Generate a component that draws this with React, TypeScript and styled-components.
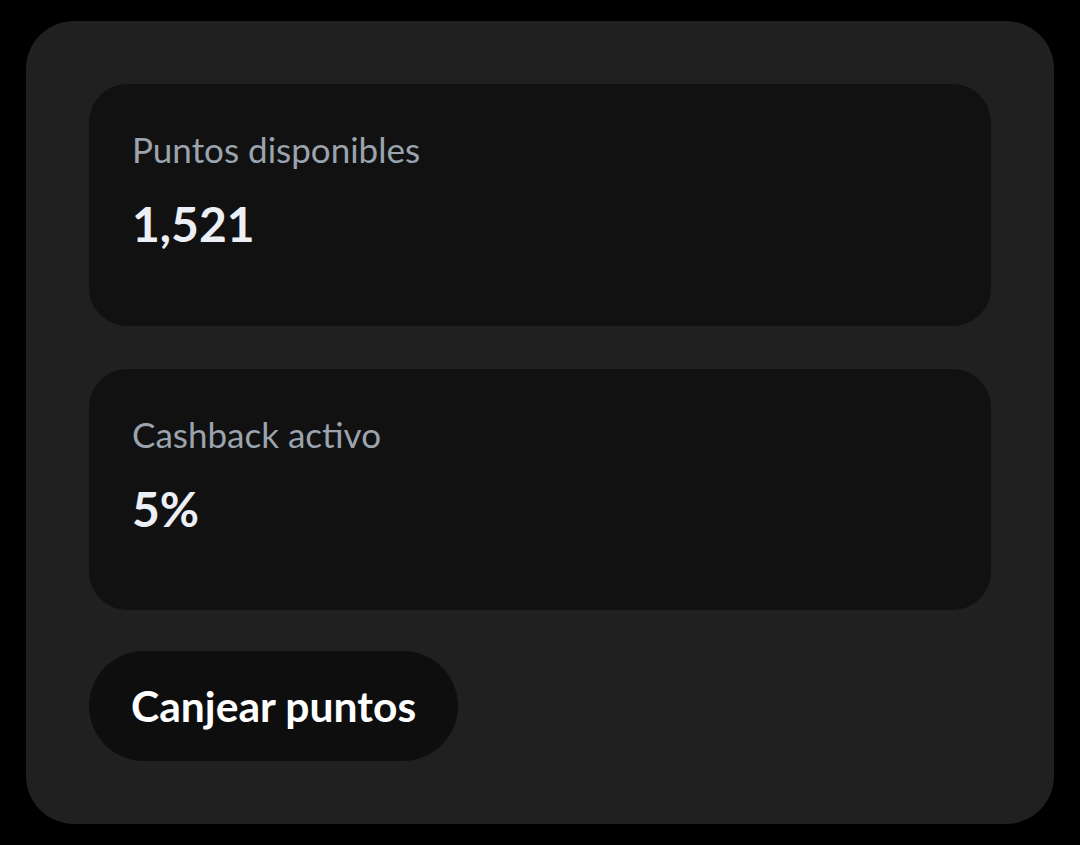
import { createGlobalStyle } from "styled-components";
import styled from "styled-components";

const GlobalStyle = createGlobalStyle`
  html, body {
    margin: 0;
    padding: 0;
    background: #000;
    font-family: Lato, "Noto Sans", sans-serif;
  }
`;

const Page = styled.div`
  width: 1080px;
  height: 845px;
  box-sizing: border-box;
  padding: 21px 26px;
  background: #000;
`;

const Panel = styled.section`
  box-sizing: border-box;
  height: 803px;
  background: #202020;
  border-radius: 48px;
  padding: 63px;
  display: flex;
  flex-direction: column;
`;

const StatCard = styled.div`
  box-sizing: border-box;
  height: 242px;
  background: #111111;
  border-radius: 38px;
  padding: 44px 43px 0;
  margin-bottom: 43px;

  & + & {
    margin-bottom: 41px;
  }
`;

const Label = styled.div`
  font-size: 35px;
  line-height: 42px;
  color: #9ba3ae;
`;

const Value = styled.div`
  margin-top: 25px;
  font-size: 48px;
  line-height: 58px;
  font-weight: 700;
  color: #eceff5;
`;

const RedeemButton = styled.button`
  align-self: flex-start;
  height: 110px;
  padding: 0 42px 1px;
  border: none;
  border-radius: 55px;
  background: #0e0e0e;
  color: #ffffff;
  font-family: inherit;
  font-size: 42.6px;
  font-weight: 700;
  display: flex;
  align-items: center;
  cursor: pointer;
`;

const stats = [
  { label: "Puntos disponibles", value: "1,521" },
  { label: "Cashback activo", value: "5%" },
];

export default function App() {
  return (
    <>
      <GlobalStyle />
      <Page>
        <Panel>
          {stats.map((s) => (
            <StatCard key={s.label}>
              <Label>{s.label}</Label>
              <Value>{s.value}</Value>
            </StatCard>
          ))}
          <RedeemButton>Canjear puntos</RedeemButton>
        </Panel>
      </Page>
    </>
  );
}
